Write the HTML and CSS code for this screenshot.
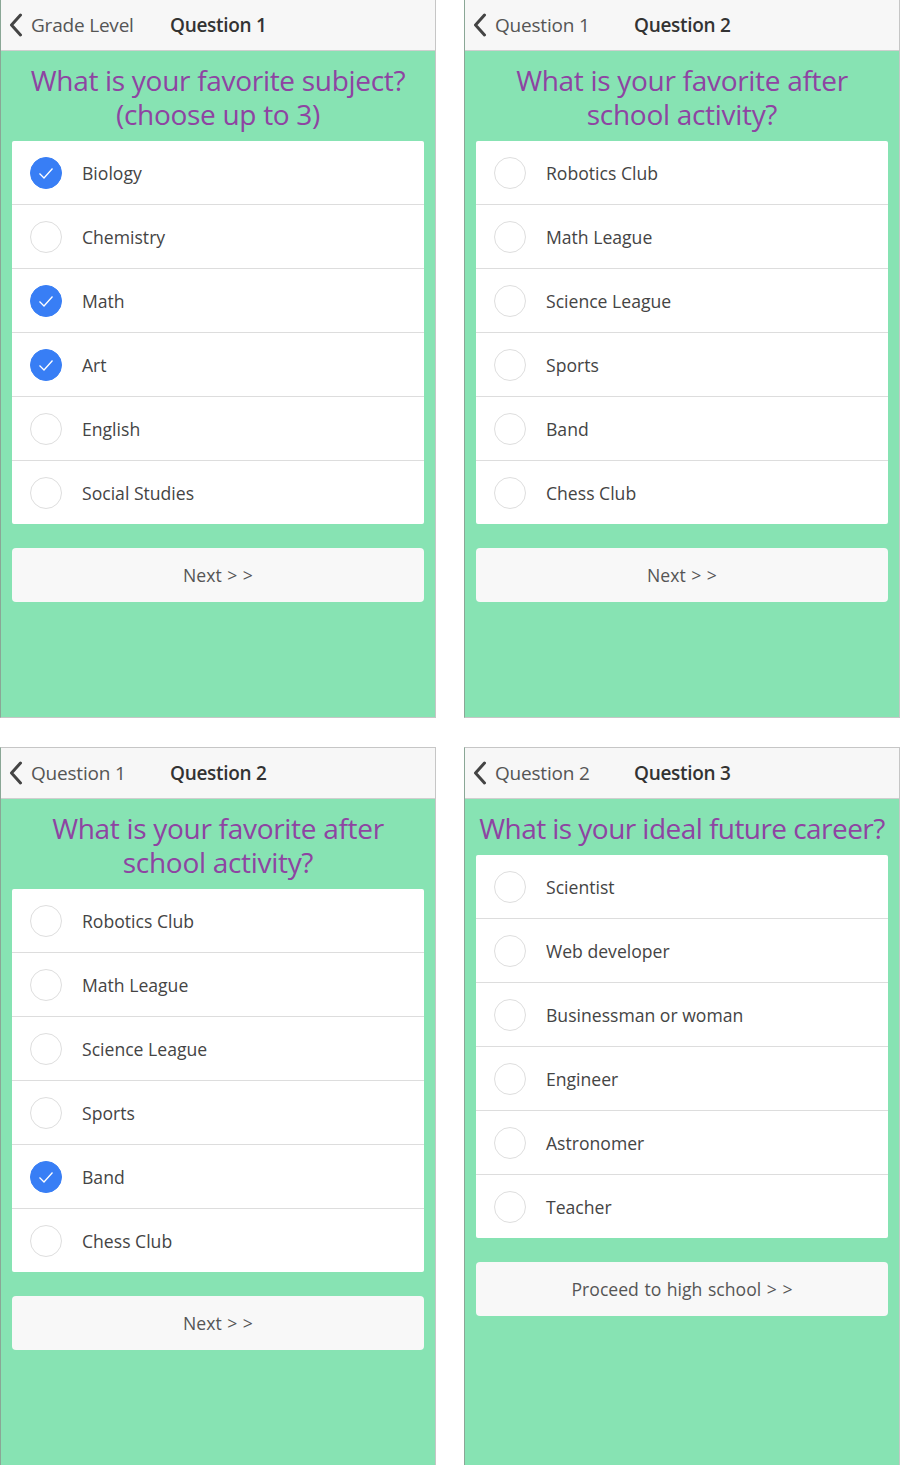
FILE: index.html
```html
<!DOCTYPE html>
<html>
<head>
<meta charset="utf-8">
<link rel="stylesheet" href="styles.css">
</head>
<body>
<div class="grid">

  <section class="panel">
    <header class="bar">
      <span class="back"><svg class="chev" viewBox="0 0 14 24" width="14" height="24"><path d="M11.5 2 L2.5 12 L11.5 22" fill="none" stroke="#444" stroke-width="3" stroke-linecap="round" stroke-linejoin="round"/></svg><span class="back-label">Grade Level</span></span>
      <span class="title">Question 1</span>
    </header>
    <div class="body">
      <h1 class="q">What is your favorite subject? (choose up to 3)</h1>
      <ul class="list">
        <li class="item"><span class="box on"><svg viewBox="0 0 32 32" width="32" height="32"><path d="M9.5 16.5 L14 21 L22.5 11.5" fill="none" stroke="#fff" stroke-width="1.3"/></svg></span>Biology</li>
        <li class="item"><span class="box"></span>Chemistry</li>
        <li class="item"><span class="box on"><svg viewBox="0 0 32 32" width="32" height="32"><path d="M9.5 16.5 L14 21 L22.5 11.5" fill="none" stroke="#fff" stroke-width="1.3"/></svg></span>Math</li>
        <li class="item"><span class="box on"><svg viewBox="0 0 32 32" width="32" height="32"><path d="M9.5 16.5 L14 21 L22.5 11.5" fill="none" stroke="#fff" stroke-width="1.3"/></svg></span>Art</li>
        <li class="item"><span class="box"></span>English</li>
        <li class="item"><span class="box"></span>Social Studies</li>
      </ul>
      <div class="btn">Next &gt; &gt;</div>
    </div>
  </section>

  <section class="panel">
    <header class="bar">
      <span class="back"><svg class="chev" viewBox="0 0 14 24" width="14" height="24"><path d="M11.5 2 L2.5 12 L11.5 22" fill="none" stroke="#444" stroke-width="3" stroke-linecap="round" stroke-linejoin="round"/></svg><span class="back-label">Question 1</span></span>
      <span class="title">Question 2</span>
    </header>
    <div class="body">
      <h1 class="q">What is your favorite after school activity?</h1>
      <ul class="list">
        <li class="item"><span class="box"></span>Robotics Club</li>
        <li class="item"><span class="box"></span>Math League</li>
        <li class="item"><span class="box"></span>Science League</li>
        <li class="item"><span class="box"></span>Sports</li>
        <li class="item"><span class="box"></span>Band</li>
        <li class="item"><span class="box"></span>Chess Club</li>
      </ul>
      <div class="btn">Next &gt; &gt;</div>
    </div>
  </section>

  <section class="panel">
    <header class="bar">
      <span class="back"><svg class="chev" viewBox="0 0 14 24" width="14" height="24"><path d="M11.5 2 L2.5 12 L11.5 22" fill="none" stroke="#444" stroke-width="3" stroke-linecap="round" stroke-linejoin="round"/></svg><span class="back-label">Question 1</span></span>
      <span class="title">Question 2</span>
    </header>
    <div class="body">
      <h1 class="q">What is your favorite after school activity?</h1>
      <ul class="list">
        <li class="item"><span class="box"></span>Robotics Club</li>
        <li class="item"><span class="box"></span>Math League</li>
        <li class="item"><span class="box"></span>Science League</li>
        <li class="item"><span class="box"></span>Sports</li>
        <li class="item"><span class="box on"><svg viewBox="0 0 32 32" width="32" height="32"><path d="M9.5 16.5 L14 21 L22.5 11.5" fill="none" stroke="#fff" stroke-width="1.3"/></svg></span>Band</li>
        <li class="item"><span class="box"></span>Chess Club</li>
      </ul>
      <div class="btn">Next &gt; &gt;</div>
    </div>
  </section>

  <section class="panel">
    <header class="bar">
      <span class="back"><svg class="chev" viewBox="0 0 14 24" width="14" height="24"><path d="M11.5 2 L2.5 12 L11.5 22" fill="none" stroke="#444" stroke-width="3" stroke-linecap="round" stroke-linejoin="round"/></svg><span class="back-label">Question 2</span></span>
      <span class="title">Question 3</span>
    </header>
    <div class="body">
      <h1 class="q tight">What is your ideal future career?</h1>
      <ul class="list">
        <li class="item"><span class="box"></span>Scientist</li>
        <li class="item"><span class="box"></span>Web developer</li>
        <li class="item"><span class="box"></span>Businessman or woman</li>
        <li class="item"><span class="box"></span>Engineer</li>
        <li class="item"><span class="box"></span>Astronomer</li>
        <li class="item"><span class="box"></span>Teacher</li>
      </ul>
      <div class="btn">Proceed to high school &gt; &gt;</div>
    </div>
  </section>

</div>
</body>
</html>
```

FILE: styles.css
```css
* { box-sizing: border-box; }
html, body { margin: 0; padding: 0; background: #fff; }
body {
  font-family: "Open Sans", "Noto Sans", sans-serif;
  overflow: hidden;
}
.grid {
  display: grid;
  grid-template-columns: 436px 436px;
  grid-auto-rows: 719px;
  column-gap: 28px;
  row-gap: 29px;
  margin-top: -1px;
}
.panel {
  border: 1px solid #c6c6c6;
  border-left-color: #8aa796;
  background: #87e3b3;
  display: flex;
  flex-direction: column;
}
.bar {
  height: 51px;
  background: #f7f7f7;
  border-bottom: 1px solid #cfcfcf;
  display: flex;
  align-items: center;
  position: relative;
}
.back {
  display: flex;
  align-items: center;
  width: 169px;
  padding-left: 8px;
  color: #555;
  font-size: 19px;
}
.chev { margin-right: 8px; }
.back-label { letter-spacing: -0.2px; }
.title {
  font-size: 19px;
  font-weight: 600;
  color: #333;
  letter-spacing: -0.3px;
}
.body {
  padding: 0 11px;
}
.q {
  margin: 12px 0 10px;
  font-size: 28px;
  line-height: 34px;
  font-weight: 400;
  color: #8e44a2;
  text-align: center;
  letter-spacing: -0.3px;
}
.q.tight {
  letter-spacing: -0.55px;
  white-space: nowrap;
}
.list {
  list-style: none;
  margin: 0;
  padding: 0;
  background: #fff;
  border-radius: 2px;
}
.item {
  height: 64px;
  display: flex;
  align-items: center;
  padding-left: 18px;
  padding-top: 1px;
  font-size: 17.6px;
  color: #444;
  border-bottom: 1px solid #ddd;
}
.item:last-child { border-bottom: none; height: 63px; }
.box {
  width: 32px;
  height: 32px;
  border-radius: 50%;
  border: 1px solid #dedede;
  background: #fff;
  margin-right: 20px;
  flex: none;
  display: flex;
}
.box.on {
  background: #387ef5;
  border-color: #387ef5;
}
.box.on svg { margin: -1px; }
.btn {
  margin-top: 24px;
  height: 54px;
  background: #f8f8f8;
  border-radius: 4px;
  display: flex;
  align-items: center;
  justify-content: center;
  font-size: 17.6px;
  color: #555;
  word-spacing: 1px;
}
```
